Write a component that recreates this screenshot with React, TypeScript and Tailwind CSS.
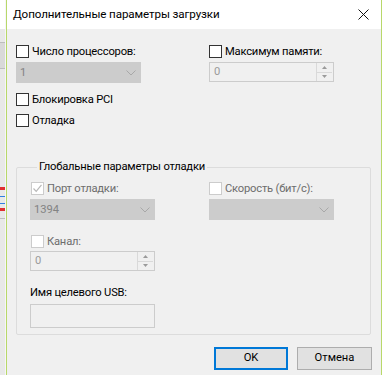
import React from "react";

const font = { fontFamily: '"Segoe UI", Roboto, "Noto Sans", sans-serif' };

function Box({ checked = false, disabled = false }: { checked?: boolean; disabled?: boolean }) {
  return (
    <div
      className={`w-[13px] h-[13px] shrink-0 border bg-white relative ${disabled ? "border-[#cccccc]" : "border-[#333333]"}`}
    >
      {checked && (
        <svg className="absolute left-0 top-0" width="11" height="11" viewBox="0 0 11 11">
          <path d="M1.5 5.5 L4.2 8.3 L9.5 1.8" stroke="#b8b8b8" strokeWidth="1.2" fill="none" />
        </svg>
      )}
    </div>
  );
}

function Check({ label, checked, disabled }: { label: string; checked?: boolean; disabled?: boolean }) {
  return (
    <div className="flex items-center h-[13px] gap-[3px]">
      <Box checked={checked} disabled={disabled} />
      <span className={`text-[11.2px] tracking-[-0.2px] leading-none ${disabled ? "text-[#6d6d6d]" : "text-black"}`}>{label}</span>
    </div>
  );
}

function Combo({ value }: { value: string }) {
  return (
    <div className="w-[125px] h-[21px] bg-[#cccccc] flex items-center justify-between pl-[4px] pr-[5px]">
      <span className="text-[11.2px] text-[#838383] leading-none">{value}</span>
      <svg width="10" height="6" viewBox="0 0 10 6">
        <path d="M0.5 0.5 L5 5 L9.5 0.5" stroke="#a8a8a8" strokeWidth="1" fill="none" />
      </svg>
    </div>
  );
}

function Spin() {
  return (
    <div className="w-[125px] h-[20px] border border-[#cccccc] bg-[#f0f0f0] flex items-center justify-between pl-[4px] pr-[1px]">
      <span className="text-[11.2px] text-[#9a9a9a] leading-none">0</span>
      <div className="flex flex-col w-[16px] h-[18px] border-l border-[#d9d9d9]">
        <div className="flex-1 flex items-center justify-center border-b border-[#d9d9d9]">
          <svg width="5" height="3" viewBox="0 0 5 3"><path d="M0 3 L2.5 0 L5 3Z" fill="#9a9a9a" /></svg>
        </div>
        <div className="flex-1 flex items-center justify-center">
          <svg width="5" height="3" viewBox="0 0 5 3"><path d="M0 0 L2.5 3 L5 0Z" fill="#9a9a9a" /></svg>
        </div>
      </div>
    </div>
  );
}

export default function App() {
  return (
    <div className="w-[383px] h-[375px] flex overflow-hidden bg-white" style={font}>
      {/* background window sliver */}
      <div className="w-[5px] h-full bg-[#e8e8e8] flex flex-col">
        <div className="h-[29px] bg-white" />
        <div className="h-[13px]" />
        <div className="h-px bg-[#bdbdbd]" />
        <div className="h-[25px] bg-[#d9d9d9]" />
        <div className="h-px bg-[#bdbdbd]" />
        <div className="h-[118px]" />
        <div className="h-[3px] bg-[#e03030]" />
        <div className="h-[6px]" />
        <div className="h-px bg-[#3080e0]" />
        <div className="h-[6px]" />
        <div className="h-px bg-[#3080e0]" />
        <div className="h-[4px]" />
        <div className="h-[3px] bg-[#e03030]" />
        <div className="h-[7px]" />
        <div className="h-px bg-[#bdbdbd]" />
      </div>
      <div className="w-px h-full bg-[#f6f6f6]" />
      <div className="w-px h-full bg-[#b8d86a]" />
      {/* dialog */}
      <div className="flex-1 flex flex-col bg-[#f0f0f0]">
        <div className="h-[29px] bg-white flex items-center justify-between pl-[6px] pr-[12px]">
          <span className="text-[11.6px] tracking-[-0.1px] text-black">Дополнительные параметры загрузки</span>
          <svg width="11" height="11" viewBox="0 0 11 11">
            <path d="M0.5 0.5 L10.5 10.5 M10.5 0.5 L0.5 10.5" stroke="#111" strokeWidth="1" />
          </svg>
        </div>
        <div className="flex flex-col pl-[9px] pt-[16px]">
          <div className="flex">
            <div className="w-[193px]">
              <Check label="Число процессоров:" />
              <div className="mt-[4px]"><Combo value="1" /></div>
            </div>
            <div>
              <Check label="Максимум памяти:" />
              <div className="mt-[4px]"><Spin /></div>
            </div>
          </div>
          <div className="mt-[10px]"><Check label="Блокировка PCI" /></div>
          <div className="mt-[8px]"><Check label="Отладка" /></div>
          <fieldset className="mt-[33px] w-[355px] h-[175px] border border-[#dcdcdc] rounded-[2px] pl-[13px] m-0">
            <legend className="ml-[7px] px-[2px] text-[11.2px] tracking-[-0.2px] leading-[14px] text-black">Глобальные параметры отладки</legend>
            <div className="flex mt-[8px]">
              <div className="w-[179px]">
                <div className="pl-px"><Check label="Порт отладки:" checked disabled /></div>
                <div className="mt-[4px]"><Combo value="1394" /></div>
                <div className="mt-[15px] pl-px"><Check label="Канал:" disabled /></div>
                <div className="mt-[3px]"><Spin /></div>
                <div className="mt-[15px] text-[11.2px] tracking-[-0.2px] leading-[14px] text-black">Имя целевого USB:</div>
                <div className="mt-[4px] w-[125px] h-[24px] border border-[#cccccc] bg-[#f0f0f0]" />
              </div>
              <div>
                <Check label="Скорость (бит/с):" disabled />
                <div className="mt-[4px]"><Combo value="" /></div>
              </div>
            </div>
          </fieldset>
          <div className="flex justify-end gap-[9px] pr-[9px] mt-[12px]">
            <button className="w-[74px] h-[23px] border-2 border-[#0078d7] bg-[#e1e1e1] text-[11.2px] text-black">OK</button>
            <button className="w-[75px] h-[23px] border border-[#adadad] bg-[#e1e1e1] text-[11.2px] text-black">Отмена</button>
          </div>
        </div>
      </div>
      <div className="w-px h-full bg-[#b8d86a]" />
      <div className="w-px h-full bg-white" />
    </div>
  );
}
